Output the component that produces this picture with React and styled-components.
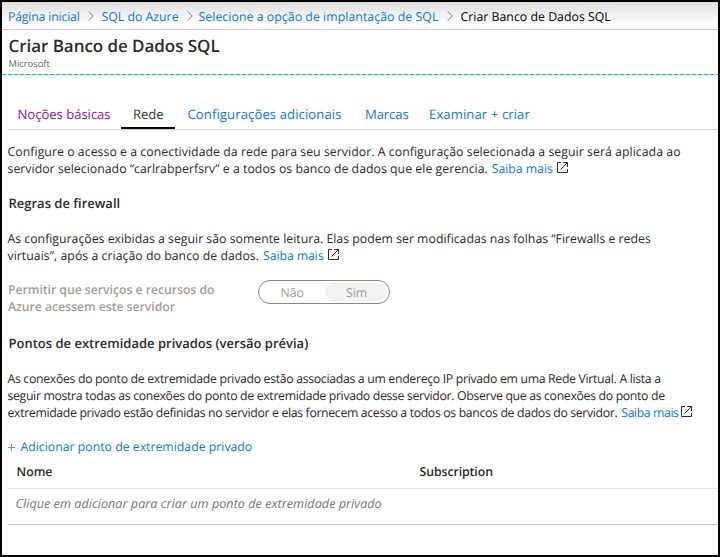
import React from 'react';
import styled, { createGlobalStyle } from 'styled-components';

const Global = createGlobalStyle`
  *, *::before, *::after { box-sizing: border-box; }
  body { margin: 0; background: #fff; }
`;

const Frame = styled.div`
  width: 720px;
  height: 557px;
  border: 2px solid #000;
  background: #fff;
  color: #2b2a29;
  font: 12.3px/17px 'Open Sans', 'Noto Sans', sans-serif;
  text-rendering: geometricPrecision;
  overflow: hidden;
  display: flex;
  flex-direction: column;
`;

const Text = styled.span`
  white-space: pre;
  letter-spacing: ${(p) => p.$track || 0}px;
`;

const LinkText = styled.a`
  white-space: pre;
  color: #0f78d4;
  text-decoration: none;
  letter-spacing: ${(p) => p.$track || 0}px;
`;

const Breadcrumb = styled.nav`
  display: flex;
  height: 28px;
  flex: none;
  padding: 6px 0 0 6px;
  border-bottom: 1px solid #d2d2d2;
  background: linear-gradient(#dcdcdc, #fff 85%);
`;

const Crumb = styled(LinkText)`
  width: ${(p) => p.$width}px;
`;

const CurrentCrumb = styled(Text)`
  color: #000;
`;

const Chevron = styled.svg`
  flex: none;
  width: 6px;
  height: 10px;
  margin: 3px ${(p) => p.$gap}px 0 7px;
  fill: none;
  stroke: #888;
`;

const Header = styled.header`
  flex: none;
  height: 45px;
  padding: 4px 0 0 6.5px;
  background: repeating-linear-gradient(90deg, #00b7f0 0 4px, #a5e5f8 4px 6px) 0 100% / 100% 1px no-repeat;
`;

const Title = styled.h1`
  margin: 0;
  font-size: 17px;
  font-weight: 600;
  line-height: 24px;
  letter-spacing: -0.05px;
`;

const Publisher = styled.div`
  font-size: 9.4px;
  line-height: 12px;
  color: #605e5c;
`;

const TabBar = styled.div`
  flex: none;
  display: flex;
  height: 31px;
  margin: 24px 0 0 6px;
  border-bottom: 1px solid #d2d2d2;
`;

const Tab = styled.a`
  width: ${(p) => p.$width}px;
  padding: 6px 0 0 ${(p) => p.$inset}px;
  font-size: 13.1px;
  line-height: 18px;
  white-space: pre;
  letter-spacing: ${(p) => p.$track || 0}px;
  color: ${(p) => p.$color || '#0f78d4'};
  border-bottom: ${(p) => (p.$active ? '2px solid #000' : '0')};
`;

const Content = styled.main`
  padding: 13px 0 0 6px;
`;

const Paragraph = styled.p`
  margin: 0 0 0 -0.5px;
`;

const Line = styled.span`
  display: flex;
  height: 17px;
`;

const Learn = styled(LinkText)`
  margin-left: ${(p) => p.$gap}px;
`;

const ExternalSvg = styled.svg`
  width: 11px;
  height: 11px;
  margin: 2px 0 0 ${(p) => p.$gap}px;
  fill: none;
  stroke: #323130;
`;

const Heading = styled.h2`
  margin: 18px 0;
  padding-left: 0.5px;
  font-size: 13px;
  font-weight: 600;
  line-height: 17px;
`;

const Setting = styled.div`
  display: flex;
  margin-top: 16px;
  height: 37px;
`;

const SettingLabel = styled.div`
  width: 250px;
  padding-top: 1px;
  font-weight: 600;
  color: #a19f9d;
`;

const Toggle = styled.div`
  display: flex;
  width: 132px;
  height: 24px;
  padding: 2px;
  border: 1px solid #8a8886;
  border-radius: 12px;
`;

const Option = styled.div`
  width: ${(p) => (p.$on ? 62 : 64)}px;
  height: 18px;
  padding-left: ${(p) => (p.$on ? 21 : 19.5)}px;
  line-height: 19px;
  border-radius: 9px;
  color: #a19f9d;
  background: ${(p) => (p.$on ? '#f3f2f1' : 'transparent')};
`;

const AddLink = styled.a`
  display: flex;
  margin-top: 17px;
  color: #0f78d4;
`;

const PlusSvg = styled.svg`
  width: 7px;
  height: 7px;
  margin: 6px 5.5px 0 0;
  fill: none;
  stroke: #4a98de;
`;

const Table = styled.div`
  display: flex;
  flex-direction: column;
  border-bottom: 1px solid #c8c8c8;
`;

const HeadRow = styled.div`
  display: grid;
  grid-template-columns: 403px 1fr;
  height: 34px;
  padding: 8px 0 0 8.5px;
  font-weight: 600;
  border-bottom: 1px solid #e6e6e6;
`;

const EmptyRow = styled.div`
  height: 35px;
  padding: 6px 0 0 7.5px;
  font-size: 12.6px;
  font-style: italic;
  color: #797775;
`;

const Separator = ({ gap }) => (
  <Chevron viewBox="0 0 6 10" $gap={gap}>
    <path d="M0.6 0.5 5.2 5 0.6 9.5" />
  </Chevron>
);

const External = ({ gap = 4 }) => (
  <ExternalSvg viewBox="0 0 11 11" $gap={gap}>
    <path d="M4 .5H.5v10h10V7M6 .5h4.5V5M10.5.5 3.5 7.5" />
  </ExternalSvg>
);

export default function App() {
  return (
    <>
      <Global />
      <Frame>
        <Breadcrumb>
          <Crumb $width={72.5} $track={-0.19}>Página inicial</Crumb>
          <Separator gap={8} />
          <Crumb $width={78}>SQL do Azure</Crumb>
          <Separator gap={6} />
          <Crumb $width={241} $track={0.05}>Selecione a opção de implantação de SQL</Crumb>
          <Separator gap={8} />
          <CurrentCrumb $track={0.02}>Criar Banco de Dados SQL</CurrentCrumb>
        </Breadcrumb>
        <Header>
          <Title>Criar Banco de Dados SQL</Title>
          <Publisher>Microsoft</Publisher>
        </Header>
        <TabBar>
          <Tab $width={113} $inset={9.5} $color="#881798" $track={-0.03}>Noções básicas</Tab>
          <Tab $width={54} $inset={12} $color="#323130" $track={-0.1} $active>Rede</Tab>
          <Tab $width={178} $inset={12.5} $track={0.1}>Configurações adicionais</Tab>
          <Tab $width={64} $inset={12} $track={-0.1}>Marcas</Tab>
          <Tab $width={120} $inset={12} $track={0.1}>Examinar + criar</Tab>
        </TabBar>
        <Content>
          <Paragraph>
            <Line><Text $track={0.04}>Configure o acesso e a conectividade da rede para seu servidor. A configuração selecionada a seguir será aplicada ao</Text></Line>
            <Line>
              <Text $track={0.022}>servidor selecionado “carlrabperfsrv” e a todos os banco de dados que ele gerencia.</Text>
              <Learn $gap={4} $track={-0.05}>Saiba mais</Learn>
              <External gap={4.5} />
            </Line>
          </Paragraph>
          <Heading>Regras de firewall</Heading>
          <Paragraph>
            <Line><Text $track={-0.005}>As configurações exibidas a seguir são somente leitura. Elas podem ser modificadas nas folhas “Firewalls e redes</Text></Line>
            <Line>
              <Text $track={0.03}>virtuais”, após a criação do banco de dados.</Text>
              <Learn $gap={4} $track={-0.07}>Saiba mais</Learn>
              <External />
            </Line>
          </Paragraph>
          <Setting>
            <SettingLabel>
              <Line><Text $track={-0.06}>Permitir que serviços e recursos do</Text></Line>
              <Line><Text $track={-0.07}>Azure acessem este servidor</Text></Line>
            </SettingLabel>
            <Toggle>
              <Option>Não</Option>
              <Option $on>Sim</Option>
            </Toggle>
          </Setting>
          <Heading>Pontos de extremidade privados (versão prévia)</Heading>
          <Paragraph>
            <Line><Text $track={-0.325}>As conexões do ponto de extremidade privado estão associadas a um endereço IP privado em uma Rede Virtual. A lista a</Text></Line>
            <Line><Text $track={-0.34}>seguir mostra todas as conexões do ponto de extremidade privado desse servidor. Observe que as conexões do ponto de</Text></Line>
            <Line>
              <Text $track={-0.352}>extremidade privado estão definidas no servidor e elas fornecem acesso a todos os bancos de dados do servidor.</Text>
              <Learn $gap={4} $track={-0.42}>Saiba mais</Learn>
              <External gap={2.5} />
            </Line>
          </Paragraph>
          <AddLink>
            <PlusSvg viewBox="0 0 7 7"><path d="M0 3.5h7M3.5 0v7" /></PlusSvg>
            <Text $track={-0.01}>Adicionar ponto de extremidade privado</Text>
          </AddLink>
          <Table>
            <HeadRow>
              <Text>Nome</Text>
              <Text $track={-0.08}>Subscription</Text>
            </HeadRow>
            <EmptyRow><Text $track={0.04}>Clique em adicionar para criar um ponto de extremidade privado</Text></EmptyRow>
          </Table>
        </Content>
      </Frame>
    </>
  );
}
